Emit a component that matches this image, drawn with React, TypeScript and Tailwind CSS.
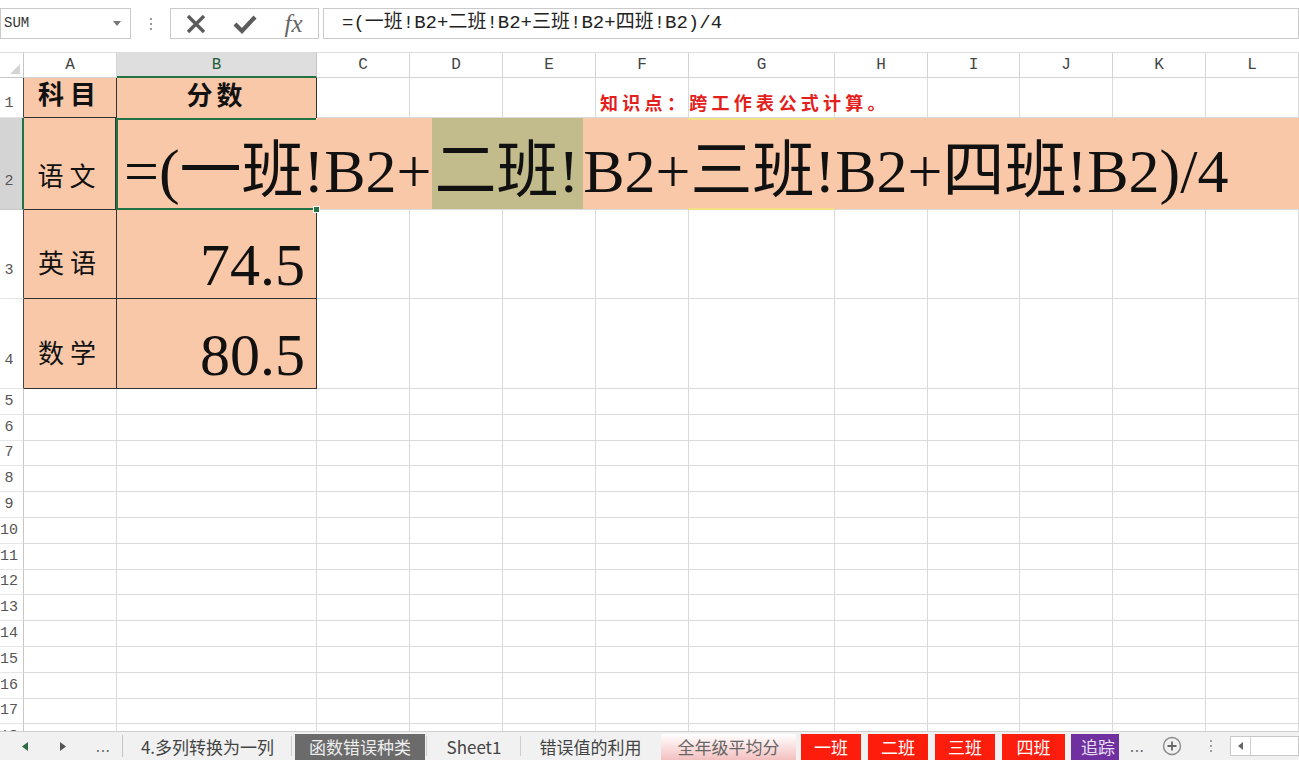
import React from "react";

const SERIF = { fontFamily: '"Liberation Serif", "Noto Sans CJK SC", serif' };
const MONO = { fontFamily: '"Liberation Mono", "Noto Sans CJK SC", monospace' };
const SANS = { fontFamily: '"Noto Sans CJK SC", "Liberation Sans", sans-serif' };

const LETTERS = ["A", "B", "C", "D", "E", "F", "G", "H", "I", "J", "K", "L"];
const COL_W = [
  "w-[93px]",
  "w-[200px]",
  "w-[93px]",
  "w-[93px]",
  "w-[93px]",
  "w-[93px]",
  "w-[146px]",
  "w-[93px]",
  "w-[92px]",
  "w-[93px]",
  "w-[93px]",
  "w-[93px]",
];

const FORMULA = "=(一班!B2+二班!B2+三班!B2+四班!B2)/4";

function RowHead({ n, className }: { n: number; className: string }) {
  return (
    <div
      className={`flex w-[24px] shrink-0 text-[15px] text-[#555] ${className}`}
      style={MONO}
    >
      <span className="w-[18px] text-center leading-none">{n}</span>
    </div>
  );
}

function GridCells({ from }: { from: number }) {
  return (
    <>
      {COL_W.slice(from).map((w, i) => (
        <div key={i} className={`${w} shrink-0 border-r border-b border-[#dadada]`} />
      ))}
    </>
  );
}

function FormulaBar() {
  return (
    <div className="flex h-[52px] shrink-0 items-start bg-white pt-[8px]">
      <div className="flex h-[31px] w-[131px] shrink-0 items-center justify-between border border-[#cacaca] pl-[3px] pr-[9px]">
        <span className="text-[14px] text-[#333]" style={MONO}>
          SUM
        </span>
        <svg width="8" height="5" viewBox="0 0 8 5">
          <path d="M0 0H8L4 5Z" fill="#777" />
        </svg>
      </div>
      <div className="flex h-[31px] w-[39px] shrink-0 flex-col items-center justify-center gap-[3px]">
        <span className="size-[2px] bg-[#9a9a9a]" />
        <span className="size-[2px] bg-[#9a9a9a]" />
        <span className="size-[2px] bg-[#9a9a9a]" />
      </div>
      <div className="flex h-[31px] w-[149px] shrink-0 items-center border border-[#cacaca]">
        <div className="flex w-[49px] justify-center">
          <svg width="22" height="20" viewBox="0 0 22 20">
            <path d="M3 2L19 18M19 2L3 18" stroke="#5c5c5c" strokeWidth="3.4" />
          </svg>
        </div>
        <div className="flex w-[49px] justify-center">
          <svg width="24" height="20" viewBox="0 0 24 20">
            <path d="M2 10L9 17L22 3" stroke="#5c5c5c" strokeWidth="4.2" fill="none" />
          </svg>
        </div>
        <div className="flex w-[49px] justify-center">
          <span className="text-[25px] italic leading-none text-[#666]" style={SERIF}>
            fx
          </span>
        </div>
      </div>
      <div
        className="ml-[4px] flex h-[31px] flex-1 items-center whitespace-nowrap border border-[#cacaca] pl-[18px] text-[19px] text-[#222]"
        style={MONO}
      >
        {FORMULA}
      </div>
    </div>
  );
}

function ColumnHeader() {
  return (
    <div className="flex h-[26px] shrink-0 border-t border-[#dcdcdc] bg-white" style={MONO}>
      <div className="relative w-[24px] shrink-0 border-r border-b border-[#c6c6c6]">
        <svg className="absolute right-[3px] bottom-[3px]" width="10" height="10" viewBox="0 0 10 10">
          <path d="M10 0V10H0Z" fill="#d4d4d4" />
        </svg>
      </div>
      {LETTERS.map((l, i) =>
        i === 1 ? (
          <div
            key={l}
            className={`${COL_W[i]} flex shrink-0 items-center justify-center border-r border-b-2 border-r-[#c6c6c6] border-b-[#217346] bg-[#dedede] text-[16px] text-[#1e5f3a]`}
          >
            {l}
          </div>
        ) : (
          <div
            key={l}
            className={`${COL_W[i]} flex shrink-0 items-center justify-center border-r border-b border-[#d4d4d4] text-[16px] text-[#444]`}
          >
            {l}
          </div>
        )
      )}
    </div>
  );
}

function Sheet() {
  return (
    <div className="flex min-h-0 flex-1 flex-col overflow-hidden bg-white" style={SERIF}>
      {/* row 1 */}
      <div className="flex h-[40px] shrink-0">
        <RowHead n={1} className="items-end pb-[6px] border-r border-b border-r-[#444] border-b-[#e4e4e4]" />
        <div className="flex w-[93px] shrink-0 items-end justify-center border-r border-b border-[#333] bg-[#f8c8a8] pb-[2px] text-[26px] font-bold tracking-[6px] text-[#111]">
          科目
        </div>
        <div className="flex w-[200px] shrink-0 items-end justify-center border-r border-[#333] bg-[#f8c8a8] pb-[2px] text-[26px] font-bold tracking-[4px] text-[#111]">
          分数
        </div>
        <GridCells from={2} />
      </div>
      {/* row 2: cell being edited, its text spills across the row */}
      <div className="flex h-[92px] shrink-0">
        <RowHead n={2} className="items-end pb-[20px] border-r-2 border-b border-r-[#217346] border-b-[#c6c6c6] bg-[#d4d4d4] text-[#1f6a90]" />
        <div className="flex w-[92px] shrink-0 items-end justify-center border-r border-b border-[#333] bg-[#f8c8a8] pb-[12px] text-[26px] tracking-[6px] text-[#111]">
          语文
        </div>
        <div className="relative flex flex-1 items-stretch whitespace-nowrap border-b border-[#dadada] bg-[#f8c8a8] pl-[8px] text-[62px] leading-none text-[#111]">
          <span className="flex items-center pt-[14px]">=(一班!B2+</span>
          <span className="flex items-center bg-[#c2bc8c] pt-[14px] pl-[3px] pr-[4px]">二班!</span>
          <span className="flex items-center pt-[14px]">B2+三班!B2+四班!B2)/4</span>
          <div className="absolute top-0 bottom-[-1px] left-0 w-[200px] border-t-2 border-b-2 border-l-2 border-[#217346]" />
          <div className="absolute bottom-[-4px] left-[197px] size-[7px] border border-white bg-[#217346]" />
          <div className="absolute top-0 left-[572px] h-[2px] w-[146px] bg-[#f3df86]" />
          <div className="absolute bottom-[-1px] left-[572px] h-[2px] w-[146px] bg-[#f3df86]" />
        </div>
      </div>
      {/* rows 3-4 */}
      {[
        { n: 3, h: "h-[89px]", name: "英语", v: "74.5" },
        { n: 4, h: "h-[90px]", name: "数学", v: "80.5" },
      ].map((r) => (
        <div key={r.n} className={`flex ${r.h} shrink-0`}>
          <RowHead n={r.n} className="items-end pb-[20px] border-r border-b border-r-[#444] border-b-[#e4e4e4]" />
          <div className="flex w-[93px] shrink-0 items-end justify-center border-r border-b border-[#333] bg-[#f8c8a8] pb-[14px] text-[26px] tracking-[6px] text-[#111]">
            {r.name}
          </div>
          <div className="flex w-[200px] shrink-0 items-end justify-end border-r border-b border-[#333] bg-[#f8c8a8] pr-[11px] pb-[3px] text-[60px] leading-none text-[#111]">
            {r.v}
          </div>
          <GridCells from={2} />
        </div>
      ))}
      {/* empty rows */}
      {[5, 6, 7, 8, 9, 10, 11, 12, 13, 14, 15, 16, 17, 18].map((n) => (
        <div key={n} className="flex h-[25.8px] shrink-0">
          <RowHead n={n} className="items-center border-r border-b border-r-[#c6c6c6] border-b-[#e6e6e6]" />
          <GridCells from={0} />
        </div>
      ))}
    </div>
  );
}

function RedNote() {
  return (
    <div
      className="pointer-events-none absolute top-[89px] left-[600px] whitespace-nowrap text-[18px] font-bold tracking-[4.3px] text-[#e3211c]"
      style={SANS}
    >
      知识点：跨工作表公式计算。
    </div>
  );
}

const TABS = [
  { label: "4.多列转换为一列", cls: "w-[165px] ml-[2px] text-[#444]" },
  { label: "函数错误种类", cls: "w-[130px] ml-[3px] bg-[#6b6b6b] text-[#eeeeee]" },
  { label: "Sheet1", cls: "w-[90px] ml-[2px] text-[#444]" },
  { label: "错误值的利用", cls: "w-[137px] ml-[1px] text-[#444]" },
  { label: "全年级平均分", cls: "w-[135px] ml-[2px] bg-linear-to-b from-white to-[#f3c0c0] text-[#666]" },
  { label: "一班", cls: "w-[60px] ml-[5px] bg-[#fd1d0d] text-white" },
  { label: "二班", cls: "w-[60px] ml-[7px] bg-[#fd1d0d] text-white" },
  { label: "三班", cls: "w-[60px] ml-[7px] bg-[#fd1d0d] text-white" },
  { label: "四班", cls: "w-[63px] ml-[7px] bg-[#fd1d0d] text-white" },
  { label: "追踪", cls: "w-[48px] ml-[6px] bg-[#7030a0] text-[#e8e0f0] justify-start pl-[10px]" },
];

function TabBar() {
  return (
    <div className="flex h-[29px] shrink-0 items-stretch border-t border-[#cfcfcf] bg-[#f1f1f1] text-[17px]" style={SANS}>
      <div className="flex w-[122px] shrink-0 items-center pl-[22px]">
        <div className="w-[38px]">
          <svg width="6" height="9" viewBox="0 0 6 9">
            <path d="M6 0V9L0 4.5Z" fill="#2f6b45" />
          </svg>
        </div>
        <div className="w-[36px]">
          <svg width="6" height="9" viewBox="0 0 6 9">
            <path d="M0 0V9L6 4.5Z" fill="#555" />
          </svg>
        </div>
        <span className="text-[14px] leading-none tracking-[1px] text-[#666]">...</span>
      </div>
      <div className="my-[3px] w-px bg-[#c4c4c4]" />
      {TABS.map((t, i) => (
        <React.Fragment key={t.label}>
          <div className={`mt-[2px] flex shrink-0 items-center justify-center whitespace-nowrap overflow-hidden ${t.cls}`}>
            {t.label}
          </div>
          {i < 3 && <div className="my-[4px] ml-[1px] w-px bg-[#cdcdcd]" />}
        </React.Fragment>
      ))}
      <span className="ml-[11px] flex w-[20px] items-center text-[14px] tracking-[1px] text-[#666]">...</span>
      <div className="ml-[12px] flex w-[20px] items-center justify-center">
        <svg width="20" height="20" viewBox="0 0 20 20">
          <circle cx="10" cy="10" r="8.5" fill="none" stroke="#8a8a8a" strokeWidth="1.4" />
          <path d="M10 5.5V14.5M5.5 10H14.5" stroke="#666" strokeWidth="1.8" />
        </svg>
      </div>
      <div className="ml-[28px] flex flex-col items-center justify-center gap-[3px]">
        <span className="size-[2px] bg-[#a0a0a0]" />
        <span className="size-[2px] bg-[#a0a0a0]" />
        <span className="size-[2px] bg-[#a0a0a0]" />
      </div>
      <div className="my-[4px] ml-[18px] flex flex-1 items-center border border-[#c8c8c8] bg-white">
        <div className="flex h-full w-[20px] items-center justify-center border-r border-[#d0d0d0]">
          <svg width="5" height="8" viewBox="0 0 5 8">
            <path d="M5 0V8L0 4Z" fill="#666" />
          </svg>
        </div>
      </div>
    </div>
  );
}

export default function App() {
  return (
    <div className="relative flex h-[760px] w-[1299px] flex-col overflow-hidden bg-white">
      <FormulaBar />
      <ColumnHeader />
      <Sheet />
      <TabBar />
      <RedNote />
    </div>
  );
}
